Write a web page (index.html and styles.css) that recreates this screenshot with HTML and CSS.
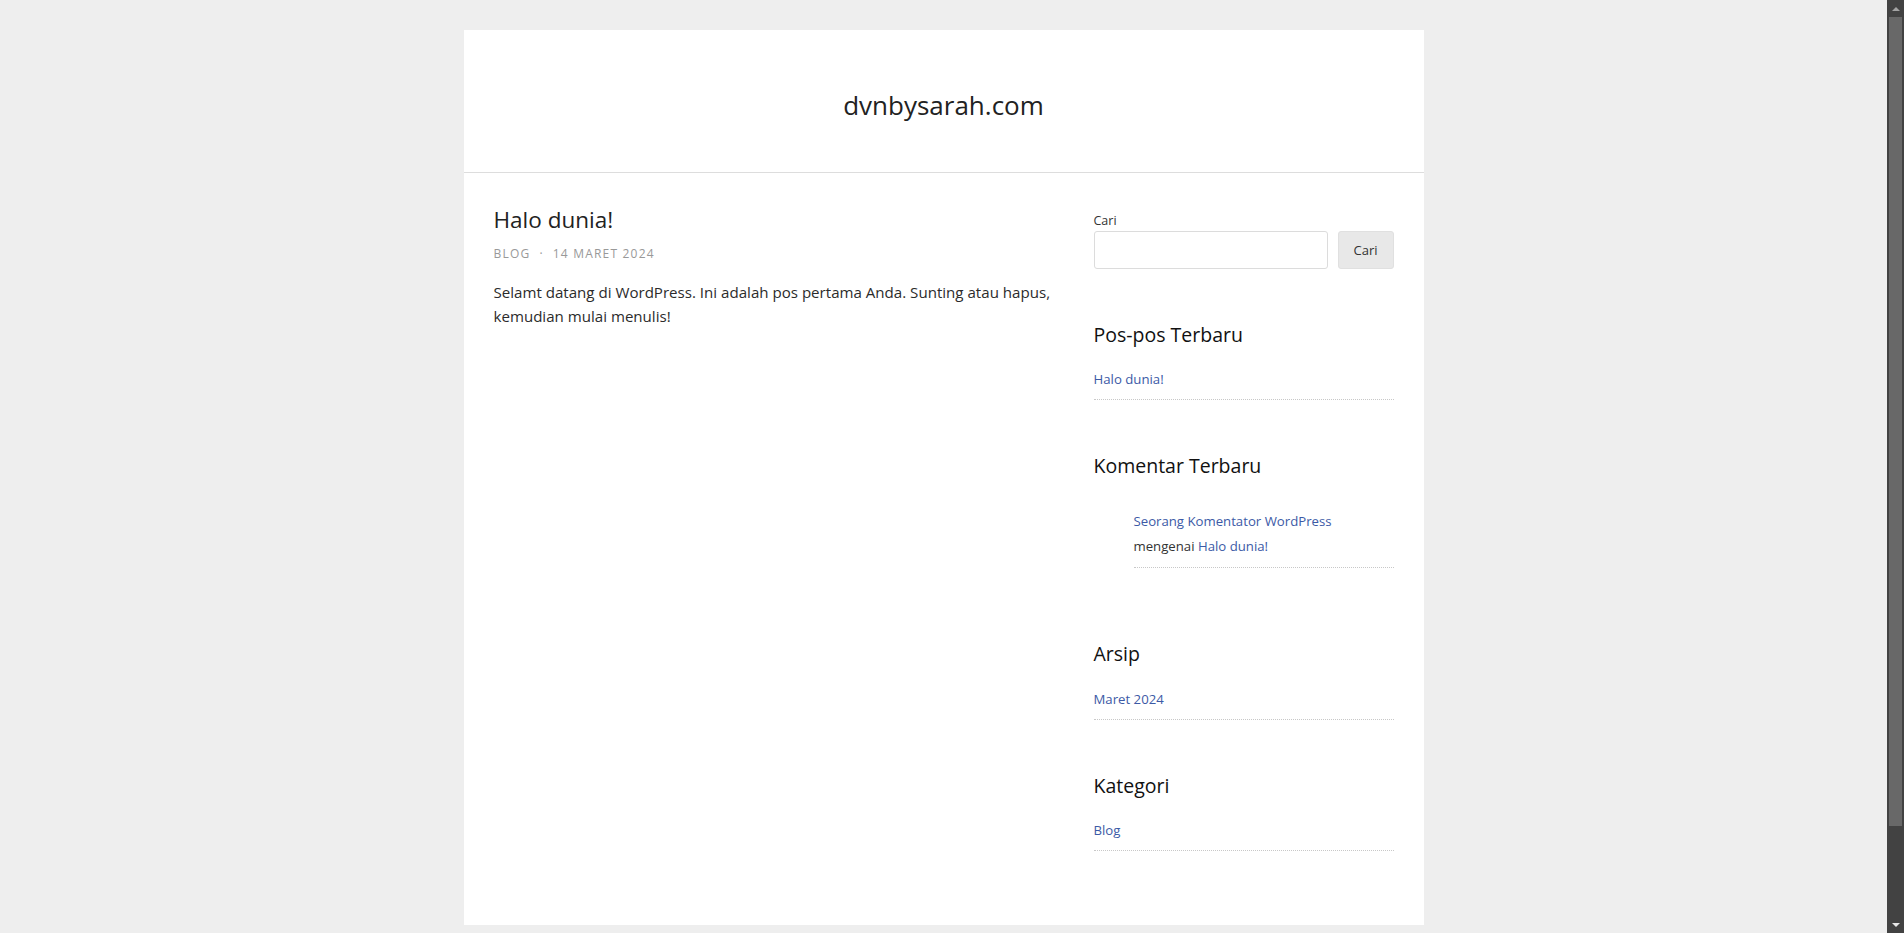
FILE: index.html
```html
<!DOCTYPE html>
<html lang="id">
<head>
<meta charset="utf-8">
<title>dvnbysarah.com</title>
<link rel="stylesheet" href="styles.css">
</head>
<body>
<div class="viewport">
  <div class="site">
    <header class="site-header">
      <p class="site-title">dvnbysarah.com</p>
    </header>
    <div class="site-content">
      <main class="main">
        <article class="post">
          <h2 class="post-title">Halo dunia!</h2>
          <div class="post-meta"><span>Blog</span><span class="sep">·</span><span>14 Maret 2024</span></div>
          <p class="post-body">Selamt datang di WordPress. Ini adalah pos pertama Anda. Sunting atau hapus, kemudian mulai menulis!</p>
        </article>
      </main>
      <aside class="sidebar">
        <section class="widget widget-search">
          <label class="search-label">Cari</label>
          <div class="search-row">
            <input class="search-input" type="text">
            <button class="search-button">Cari</button>
          </div>
        </section>
        <section class="widget">
          <h3 class="widget-title">Pos-pos Terbaru</h3>
          <ul class="widget-list">
            <li><a href="#">Halo dunia!</a></li>
          </ul>
        </section>
        <section class="widget widget-comments">
          <h3 class="widget-title">Komentar Terbaru</h3>
          <ul class="widget-list comment-list">
            <li><span class="comment-author"><a href="#">Seorang Komentator WordPress</a></span> mengenai <a href="#">Halo dunia!</a></li>
          </ul>
        </section>
        <section class="widget">
          <h3 class="widget-title">Arsip</h3>
          <ul class="widget-list">
            <li><a href="#">Maret 2024</a></li>
          </ul>
        </section>
        <section class="widget">
          <h3 class="widget-title">Kategori</h3>
          <ul class="widget-list">
            <li><a href="#">Blog</a></li>
          </ul>
        </section>
      </aside>
    </div>
  </div>
</div>
<div class="scrollbar">
  <div class="scroll-btn"><span class="arrow-up"></span></div>
  <div class="scroll-track"><div class="scroll-thumb"></div></div>
  <div class="scroll-btn"><span class="arrow-down"></span></div>
</div>
</body>
</html>
```

FILE: styles.css
```css
html, body {
  height: 100%;
}
body {
  margin: 0;
  display: flex;
  overflow: hidden;
  background: #eeeeee;
  font-family: "Open Sans", "Noto Sans", sans-serif;
  color: #333;
}
.viewport {
  flex: 1;
  height: 100vh;
  overflow: hidden;
  padding-top: 30px;
  box-sizing: border-box;
}
.site {
  width: 960px;
  margin: 0 auto;
  background: #fff;
}
.site-header {
  height: 133px;
  padding-top: 9px;
  border-bottom: 1px solid #dddddd;
  display: flex;
  align-items: center;
  justify-content: center;
}
.site-title {
  margin: 0;
  font-size: 26px;
  color: #222;
  line-height: 1.3;
}
.site-content {
  display: flex;
  gap: 30px;
  padding: 32px 30px 74px;
}
.main {
  width: 570px;
}
.post-title {
  margin: 0;
  font-size: 22.5px;
  font-weight: 400;
  line-height: 30px;
  color: #222;
}
.post-meta {
  margin-top: 10px;
  font-size: 12px;
  line-height: 18px;
  letter-spacing: 1.2px;
  text-transform: uppercase;
  color: #999;
  display: flex;
  gap: 9px;
}
.post-body {
  margin: 17px 0 0;
  font-size: 15.1px;
  line-height: 24px;
  color: #2b2b2b;
}
.sidebar {
  width: 300px;
  display: flex;
  flex-direction: column;
}
.widget {
  margin-bottom: 53px;
}
.widget-search {
  margin-bottom: 52.5px;
}
.widget:last-child {
  margin-bottom: 0;
}
.search-label {
  display: block;
  margin-top: 6px;
  font-size: 12.5px;
  line-height: 20px;
  color: #333;
}
.search-row {
  display: flex;
  gap: 10px;
  margin-top: 0;
}
.search-input {
  flex: 1;
  min-width: 0;
  height: 38px;
  box-sizing: border-box;
  border: 1px solid #dcdcdc;
  border-radius: 3px;
  margin: 0;
  padding: 0 8px;
  font-family: inherit;
}
.search-button {
  width: 56px;
  height: 38px;
  box-sizing: border-box;
  border: 1px solid #e0e0e0;
  border-radius: 3px;
  background: #e8e8e8;
  font-family: inherit;
  font-size: 13px;
  color: #333;
  margin: 0;
  padding: 0;
}
.widget-title {
  margin: 0;
  font-size: 19.5px;
  font-weight: 400;
  line-height: 26px;
  color: #111;
}
.widget-list {
  list-style: none;
  margin: 21.5px 0 0;
  padding: 0;
}
.widget-list li {
  font-size: 13.2px;
  line-height: 20px;
  padding-bottom: 10px;
  border-bottom: 1px dotted #c8c8c8;
  color: #333;
}
.widget-list a {
  color: #3c5aa6;
  text-decoration: none;
}
.widget-comments {
  margin-bottom: 73px;
}
.comment-list {
  margin-top: 30px;
  padding-left: 40px;
}
.comment-list li {
  line-height: 25px;
  padding-bottom: 8px;
}
.scrollbar {
  width: 17px;
  height: 100vh;
  flex: none;
  background: #424242;
  display: flex;
  flex-direction: column;
}
.scroll-btn {
  height: 17px;
  flex: none;
  display: flex;
  align-items: center;
  justify-content: center;
}
.arrow-up {
  width: 0;
  height: 0;
  border-left: 4px solid transparent;
  border-right: 4px solid transparent;
  border-bottom: 4px solid #a3a3a3;
}
.arrow-down {
  width: 0;
  height: 0;
  border-left: 4px solid transparent;
  border-right: 4px solid transparent;
  border-top: 4px solid #e8e8e8;
}
.scroll-track {
  flex: 1;
  padding: 0 2px;
}
.scroll-thumb {
  height: 809px;
  background: #686868;
}
```
